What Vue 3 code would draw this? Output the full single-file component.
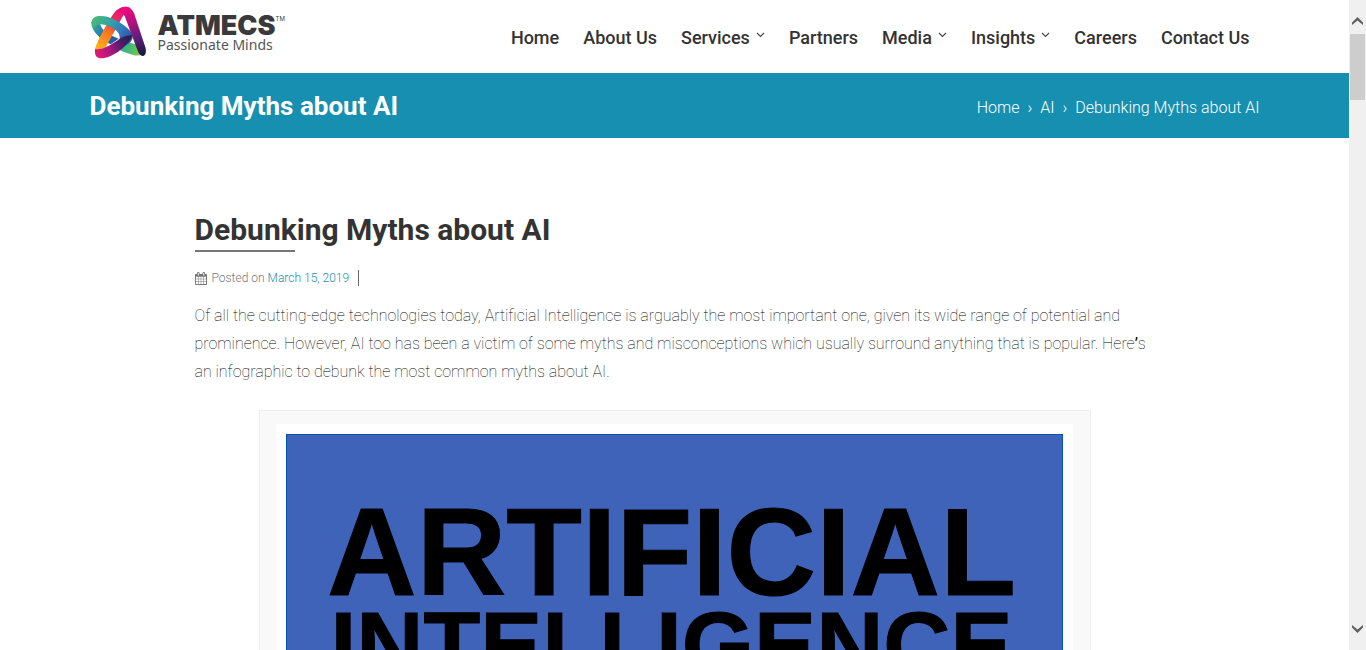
<script setup>
const navItems = [
  { label: 'Home' },
  { label: 'About Us' },
  { label: 'Services', menu: true },
  { label: 'Partners' },
  { label: 'Media', menu: true },
  { label: 'Insights', menu: true },
  { label: 'Careers' },
  { label: 'Contact Us' }
]
</script>

<template>
  <div class="window">
    <div class="page">
      <header class="container site-header">
        <a class="brand" href="#" aria-label="ATMECS home">
          <svg class="mark" viewBox="21 18 168 159" aria-hidden="true">
            <defs>
              <linearGradient id="leftLeg" gradientUnits="userSpaceOnUse" x1="125" y1="25" x2="50" y2="145">
                <stop offset="0" stop-color="#ec0f7d" />
                <stop offset="0.35" stop-color="#ee2a5b" />
                <stop offset="0.65" stop-color="#f97a20" />
                <stop offset="1" stop-color="#fdae18" />
              </linearGradient>
              <linearGradient id="rightLeg" gradientUnits="userSpaceOnUse" x1="125" y1="25" x2="178" y2="165">
                <stop offset="0" stop-color="#f0087c" />
                <stop offset="0.3" stop-color="#b5127e" />
                <stop offset="0.65" stop-color="#5c2079" />
                <stop offset="1" stop-color="#1c1838" />
              </linearGradient>
              <linearGradient id="ringTop" gradientUnits="userSpaceOnUse" x1="30" y1="55" x2="145" y2="120">
                <stop offset="0" stop-color="#47b877" />
                <stop offset="0.35" stop-color="#35a5a4" />
                <stop offset="0.7" stop-color="#3275bd" />
                <stop offset="1" stop-color="#354aa0" />
              </linearGradient>
              <linearGradient id="ringLow" gradientUnits="userSpaceOnUse" x1="25" y1="70" x2="110" y2="125">
                <stop offset="0" stop-color="#36ad91" />
                <stop offset="0.45" stop-color="#2675b5" />
                <stop offset="1" stop-color="#254f9c" />
              </linearGradient>
              <linearGradient id="greenBar" gradientUnits="userSpaceOnUse" x1="90" y1="125" x2="170" y2="155">
                <stop offset="0" stop-color="#249ba8" />
                <stop offset="0.5" stop-color="#3cb782" />
                <stop offset="1" stop-color="#79c943" />
              </linearGradient>
              <linearGradient id="base" gradientUnits="userSpaceOnUse" x1="35" y1="160" x2="138" y2="115">
                <stop offset="0" stop-color="#e31974" />
                <stop offset="0.4" stop-color="#a9187f" />
                <stop offset="0.75" stop-color="#4c1d68" />
                <stop offset="1" stop-color="#252052" />
              </linearGradient>
            </defs>
            <path fill="url(#greenBar)" d="M85 138 L112 116 Q140 132 164 133 L176 163 Q163 169 148 165 Q112 156 85 138Z" />
            <path fill="url(#ringLow)" d="M22 65 C20 91 48 119 80 133 L104 116 C76 106 52 91 49 73 Z" />
            <path fill="url(#leftLeg)" d="M33 148 C38 126 72 64 90 39 C103 22 124 15 139 25 C128 28 120 44 109 62 L67 138 Q61 148 34 150Z" />
            <path fill="url(#ringTop)" d="M23 70 C20 40 67 44 99 62 C121 75 146 92 146 111 C145 123 135 133 118 139 L107 119 C110 100 96 88 78 80 C58 71 36 68 30 86Z" />
            <path fill="url(#rightLeg)" d="M109 24 C131 14 145 26 151 42 L185 145 Q188 165 178 168 Q167 168 161 152 L122 48 Q117 38 101 34Z" />
            <path fill="url(#base)" d="M33 147 C54 151 82 135 111 113 Q132 104 145 106 C139 129 97 168 61 174 C39 178 31 168 33 147Z" />
          </svg>
          <span class="wordmark">
            <span class="name">ATMECS<span class="tm">TM</span></span>
            <span class="tagline">Passionate Minds</span>
          </span>
        </a>
        <nav class="main-nav" aria-label="Main">
          <a v-for="item in navItems" :key="item.label" href="#">
            {{ item.label }}
            <svg v-if="item.menu" class="caret" viewBox="0 0 9 6" aria-hidden="true">
              <path d="M1 1 L4.5 4.5 L8 1" fill="none" stroke="#444" stroke-width="1.1" />
            </svg>
          </a>
        </nav>
      </header>

      <div class="title-band">
        <div class="container band-inner">
          <h1>Debunking Myths about AI</h1>
          <nav class="crumbs" aria-label="Breadcrumb">
            <a href="#">Home</a><span>›</span><a href="#">AI</a><span>›</span><span>Debunking Myths about AI</span>
          </nav>
        </div>
      </div>

      <main class="article">
        <h2>Debunking Myths about AI</h2>
        <p class="meta">
          <svg class="calendar" viewBox="64 0 1664 1792" aria-hidden="true">
            <path fill="#777" d="M192 1664h288v-288h-288v288zm352 0h320v-288h-320v288zm-352-352h288v-320h-288v320zm352 0h320v-320h-320v320zm-352-384h288v-288h-288v288zm736 736h320v-288h-320v288zm-384-736h320v-288h-320v288zm768 736h288v-288h-288v288zm-384-352h320v-320h-320v320zm-352-864v-288q0-13-9.500-22.500t-22.500-9.500h-64q-13 0-22.500 9.500t-9.500 22.500v288q0 13 9.500 22.500t22.500 9.500h64q13 0 22.500-9.500t9.500-22.500zm736 864h288v-320h-288v320zm-384-384h320v-288h-320v288zm384 0h288v-288h-288v288zm32-480v-288q0-13-9.500-22.500t-22.500-9.500h-64q-13 0-22.500 9.500t-9.500 22.500v288q0 13 9.500 22.500t22.500 9.500h64q13 0 22.500-9.500t9.500-22.500zm384-64v1280q0 52-38 90t-90 38h-1408q-52 0-90-38t-38-90v-1280q0-52 38-90t90-38h128v-96q0-66 47-113t113-47h64q66 0 113 47t47 113v96h384v-96q0-66 47-113t113-47h64q66 0 113 47t47 113v96h128q52 0 90 38t38 90z" />
          </svg>
          <span class="posted">Posted on <a href="#">March 15, 2019</a></span>
        </p>
        <p class="intro">
          Of all the cutting-edge technologies today, Artificial Intelligence is arguably the most important one,
          given its wide range of potential and prominence. However, AI too has been a victim of some myths and
          misconceptions which usually surround anything that is popular. Here<b>’</b>s an infographic to debunk the most
          common myths about AI.
        </p>
        <figure class="frame">
          <div class="mat">
            <div class="poster">
              <span class="line-one">ARTIFICIAL</span>
              <span class="line-two">INTELLIGENCE</span>
            </div>
          </div>
        </figure>
      </main>
    </div>

    <div class="scrollbar">
      <button type="button" aria-label="Scroll up">
        <svg viewBox="0 0 11 8" aria-hidden="true"><path d="M0 5.500 L5.500 0 L11 5.500 V8 L5.500 3.500 L0 8Z" fill="#606060" /></svg>
      </button>
      <div class="track"><div class="thumb"></div></div>
      <button type="button" aria-label="Scroll down">
        <svg viewBox="0 0 11 8" aria-hidden="true"><path d="M0 2.500 L5.500 8 L11 2.500 V0 L5.500 4.500 L0 0Z" fill="#606060" /></svg>
      </button>
    </div>
  </div>
</template>

<style>
body {
  margin: 0;
  background: #fff;
}
</style>

<style scoped>
.window {
  display: flex;
  height: 100vh;
  overflow: hidden;
  font-family: Roboto, "Liberation Sans", sans-serif;
  color: #333;
}
a {
  color: inherit;
  text-decoration: none;
}
.page {
  flex: 1;
  min-width: 0;
}
.container {
  box-sizing: border-box;
  max-width: 1170px;
  margin: 0 auto;
}
.site-header {
  display: flex;
  justify-content: space-between;
  height: 73px;
}
.brand {
  display: flex;
  padding: 6px 0 0 1px;
}
.mark {
  width: 56px;
  height: 53px;
}
.wordmark {
  display: flex;
  flex-direction: column;
  padding: 9px 0 0 11px;
}
.name {
  display: flex;
  font: 900 27px/22px Inter, "Liberation Sans", sans-serif;
  color: #3a393b;
}
.tm {
  font-weight: 400;
  font-size: 6px;
  line-height: 8px;
}
.tagline {
  font: 400 14px/16px "Noto Sans", "Liberation Sans", sans-serif;
  color: #555;
}
.main-nav {
  display: flex;
  align-items: center;
  gap: 24px;
  padding: 2px 10px 0 0;
  font-size: 18px;
  line-height: 24px;
  font-weight: 500;
}
.main-nav a {
  display: flex;
}
.caret {
  width: 9px;
  height: 6px;
  margin: 6px 0 0 6px;
}
.title-band {
  background: #178fb0;
  color: #fff;
}
.band-inner {
  display: flex;
  justify-content: space-between;
  align-items: center;
  height: 65px;
}
h1 {
  margin: 0;
  font-size: 26px;
  line-height: 32px;
  font-weight: 700;
}
.crumbs {
  display: flex;
  gap: 8px;
  padding-top: 4px;
  font-size: 16px;
  line-height: 24px;
  font-weight: 300;
}
.article {
  max-width: 960px;
  margin: 0 auto;
  padding-top: 74px;
}
h2 {
  margin: 0;
  font-size: 30px;
  line-height: 36px;
  font-weight: 700;
}
h2::after {
  content: "";
  display: block;
  width: 100px;
  height: 2px;
  margin-top: 2px;
  background: #777;
}
.meta {
  display: flex;
  align-items: center;
  width: max-content;
  margin: 18px 0 0;
  font-size: 12px;
  line-height: 16px;
  font-weight: 300;
  color: #777;
}
.calendar {
  width: 12px;
  height: 13px;
}
.posted {
  padding: 0 9px 0 5px;
  border-right: 1px solid #666;
}
.meta a {
  color: #178fb0;
}
.intro {
  margin: 16px 0 0;
  font-size: 16px;
  line-height: 28px;
  font-weight: 100;
  color: #000;
}
.intro b {
  font-weight: 400;
}
.frame {
  box-sizing: border-box;
  max-width: 832px;
  margin: 24px auto 0;
  padding: 13px 17px 13px 16px;
  border: 1px solid #eee;
  background: #f9f9f9;
}
.mat {
  padding: 10px;
  background: #fff;
}
.poster {
  display: flex;
  flex-direction: column;
  align-items: center;
  height: 1200px;
  padding: 55px 5px 0 0;
  border: 1px solid #0553b5;
  background: #4063ba;
  color: #000;
  font-family: "Liberation Sans", Arial, sans-serif;
  font-weight: 700;
  -webkit-text-stroke: 1px #000;
}
.line-one {
  font-size: 124px;
  line-height: 124px;
}
.line-two {
  font-size: 93px;
  line-height: 92px;
  margin-top: -15px;
}
.scrollbar {
  display: flex;
  flex-direction: column;
  width: 17px;
  background: #f0f0f0;
}
.scrollbar button {
  display: flex;
  align-items: center;
  justify-content: center;
  height: 34px;
  padding: 8px 0 0;
  border: 0;
  background: none;
}
.scrollbar button:last-child {
  padding: 0 0 8px;
}
.scrollbar svg {
  width: 11px;
  height: 8px;
}
.track {
  flex: 1;
  padding: 0 1px;
}
.thumb {
  height: 66px;
  background: #cdcdcd;
}
</style>
